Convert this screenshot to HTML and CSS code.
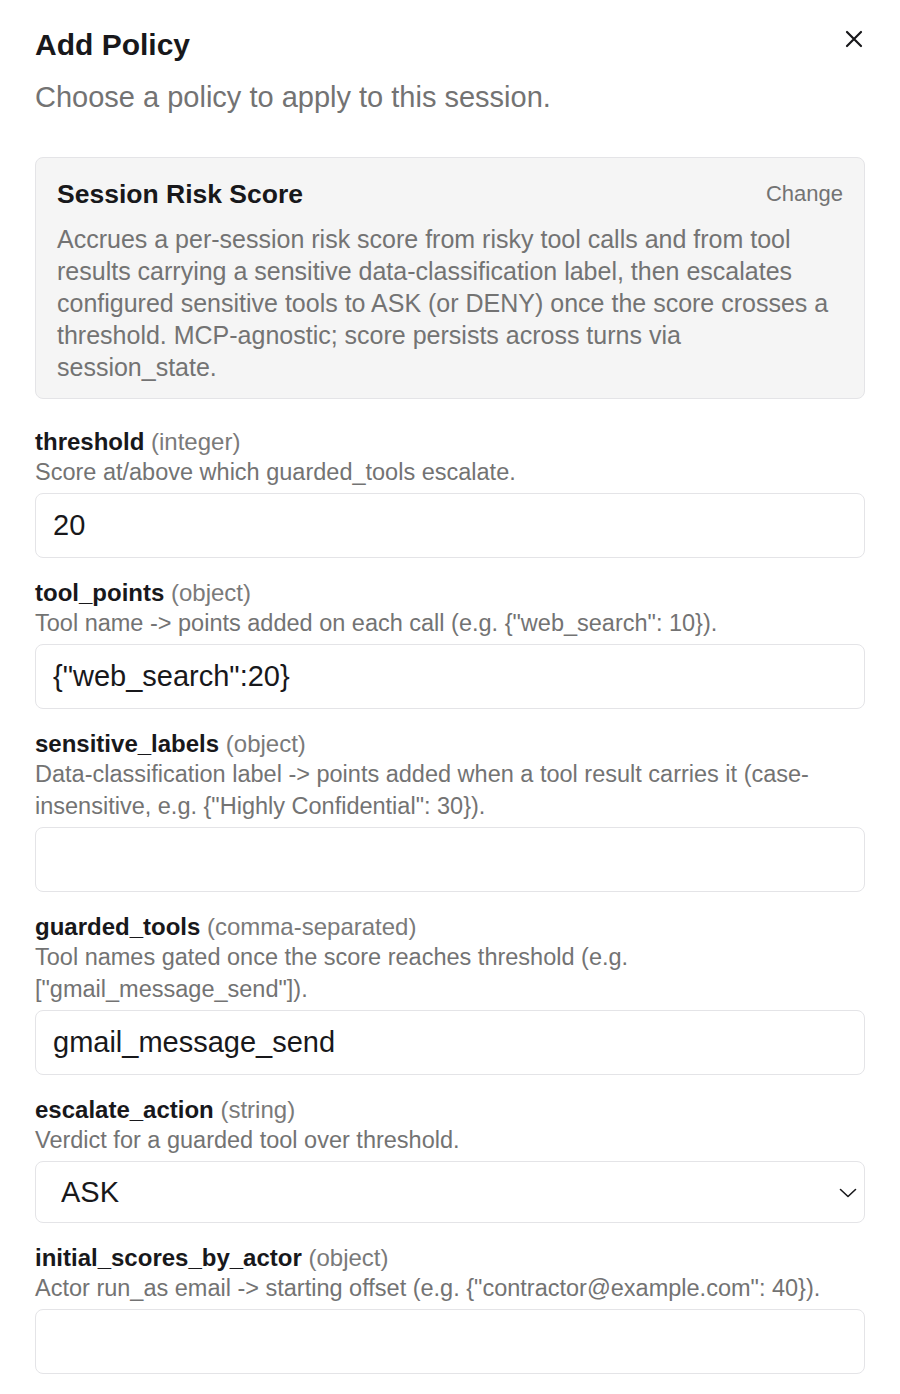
FILE: index.html
```html
<!DOCTYPE html>
<html lang="en">
<head>
    <meta charset="UTF-8">
    <meta name="viewport" content="width=device-width, initial-scale=1.0">
    <title>Add Policy</title>
    <link rel="stylesheet" href="styles.css">
</head>
<body>

    <div class="dialog">
        <div class="dialog-head">
            <div>
                <h2 class="dialog-title">Add Policy</h2>
                <p class="dialog-sub">Choose a policy to apply to this session.</p>
            </div>
            <button class="close-btn" aria-label="Close">
                <svg width="18" height="18" viewBox="0 0 18 18" fill="none" stroke="currentColor" stroke-width="2.2" stroke-linecap="round">
                    <path d="M2 2L16 16M16 2L2 16"/>
                </svg>
            </button>
        </div>

        <!-- selected policy -->
        <div class="policy-card">
            <div class="policy-card-head">
                <h3 class="policy-name">Session Risk Score</h3>
                <button class="change-btn">Change</button>
            </div>
            <p class="policy-desc">Accrues a per-session risk score from risky tool calls and from tool results carrying a sensitive data-classification label, then escalates configured sensitive tools to ASK (or DENY) once the score crosses a threshold. MCP-agnostic; score persists across turns via session_state.</p>
        </div>

        <!-- policy params -->
        <div class="field">
            <label for="threshold"><span class="field-name">threshold</span> <span class="field-type">(integer)</span></label>
            <p class="field-help">Score at/above which guarded_tools escalate.</p>
            <input type="text" id="threshold" value="20">
        </div>

        <div class="field">
            <label for="tool-points"><span class="field-name">tool_points</span> <span class="field-type">(object)</span></label>
            <p class="field-help">Tool name -&gt; points added on each call (e.g. {"web_search": 10}).</p>
            <input type="text" id="tool-points" value='{"web_search":20}'>
        </div>

        <div class="field">
            <label for="sensitive-labels"><span class="field-name">sensitive_labels</span> <span class="field-type">(object)</span></label>
            <p class="field-help">Data-classification label -&gt; points added when a tool result carries it (case-insensitive, e.g. {"Highly Confidential": 30}).</p>
            <input type="text" id="sensitive-labels" value="">
        </div>

        <div class="field">
            <label for="guarded-tools"><span class="field-name">guarded_tools</span> <span class="field-type">(comma-separated)</span></label>
            <p class="field-help">Tool names gated once the score reaches threshold (e.g. ["gmail_message_send"]).</p>
            <input type="text" id="guarded-tools" value="gmail_message_send">
        </div>

        <div class="field">
            <label for="escalate-action"><span class="field-name">escalate_action</span> <span class="field-type">(string)</span></label>
            <p class="field-help">Verdict for a guarded tool over threshold.</p>
            <div class="select-wrap">
                <select id="escalate-action">
                    <option selected>ASK</option>
                    <option>DENY</option>
                </select>
                <svg class="select-arrow" width="18" height="10" viewBox="0 0 18 10" fill="none" stroke="currentColor" stroke-width="1.6" stroke-linecap="round" stroke-linejoin="round">
                    <path d="M1.5 1.5L9 8.5L16.5 1.5"/>
                </svg>
            </div>
        </div>

        <div class="field">
            <label for="initial-scores"><span class="field-name">initial_scores_by_actor</span> <span class="field-type">(object)</span></label>
            <p class="field-help">Actor run_as email -&gt; starting offset (e.g. {"contractor@example.com": 40}).</p>
            <input type="text" id="initial-scores" value="">
        </div>
    </div>

</body>
</html>
```

FILE: styles.css
```css
body {
    font-family: 'Liberation Sans', Arial, sans-serif;
    background-color: #ffffff;
    color: #18181b;
    margin: 0;
}
.dialog {
    padding: 27px 35px 40px;
}
.dialog-head {
    display: flex;
    justify-content: space-between;
    align-items: flex-start;
}
.dialog-title {
    margin: 0;
    font-size: 30px;
    line-height: 36px;
    font-weight: 600;
    color: #18181b;
}
.dialog-sub {
    margin: 16px 0 0;
    font-size: 29px;
    line-height: 36px;
    color: #737373;
}
.close-btn {
    background: none;
    border: none;
    padding: 0;
    margin: 3px 2px 0 0;
    color: #18181b;
    cursor: pointer;
    display: flex;
}
.policy-card {
    margin-top: 42px;
    background-color: #f5f5f5;
    border: 1px solid #e4e4e7;
    border-radius: 8px;
    padding: 19px 21px 15px;
}
.policy-card-head {
    display: flex;
    justify-content: space-between;
    align-items: center;
}
.policy-name {
    margin: 0;
    font-size: 26.5px;
    line-height: 34px;
    font-weight: 600;
    color: #18181b;
}
.change-btn {
    background: none;
    border: none;
    padding: 0;
    font-family: inherit;
    font-size: 22px;
    color: #737373;
    cursor: pointer;
}
.policy-desc {
    margin: 12px 0 0;
    font-size: 25px;
    line-height: 32px;
    color: #737373;
}
.field {
    margin-top: 21px;
}
.policy-card + .field {
    margin-top: 29px;
}
label {
    display: block;
    font-size: 24px;
    line-height: 28px;
}
.field-name {
    font-weight: 600;
    color: #18181b;
}
.field-type {
    color: #7a7a7a;
}
.field-help {
    margin: 0;
    font-size: 23.5px;
    line-height: 32px;
    color: #737373;
}
input[type="text"], select {
    display: block;
    width: 100%;
    height: 65px;
    margin-top: 5px;
    padding: 0 17px;
    border: 1px solid #e4e4e7;
    border-radius: 8px;
    background-color: #ffffff;
    font-family: inherit;
    font-size: 29px;
    color: #18181b;
    box-sizing: border-box;
    outline: none;
}
input[type="text"]:focus, select:focus {
    border-color: #a1a1aa;
}
.select-wrap {
    position: relative;
}
select {
    height: 62px;
    padding-left: 25px;
    appearance: none;
    -webkit-appearance: none;
    cursor: pointer;
}
.select-arrow {
    position: absolute;
    right: 8px;
    top: 27px;
    color: #18181b;
    pointer-events: none;
}
```
